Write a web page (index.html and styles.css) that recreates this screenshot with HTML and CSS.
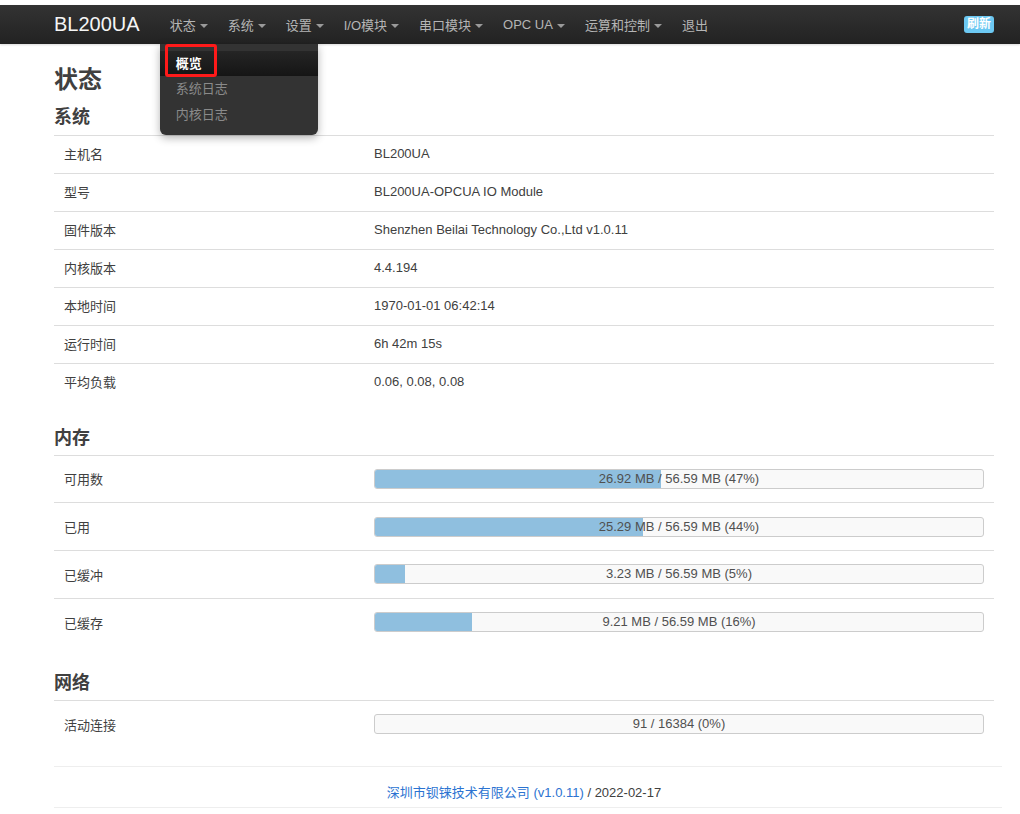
FILE: index.html
```html
<!DOCTYPE html>
<html lang="zh-CN">
<head>
<meta charset="utf-8">
<title>BL200UA - 状态</title>
<link rel="stylesheet" href="styles.css">
</head>
<body>
<header class="navbar">
  <div class="container nav-inner">
    <a class="brand" href="#">BL200UA</a>
    <ul class="nav">
      <li class="dropdown">
        <a href="#">状态<span class="caret"></span></a>
        <ul class="dropdown-menu">
          <li class="active"><a href="#">概览</a></li>
          <li><a href="#">系统日志</a></li>
          <li><a href="#">内核日志</a></li>
        </ul>
        <span class="mark"></span>
      </li>
      <li><a href="#">系统<span class="caret"></span></a></li>
      <li><a href="#">设置<span class="caret"></span></a></li>
      <li><a href="#">I/O模块<span class="caret"></span></a></li>
      <li><a href="#">串口模块<span class="caret"></span></a></li>
      <li><a href="#">OPC UA<span class="caret"></span></a></li>
      <li><a href="#">运算和控制<span class="caret"></span></a></li>
      <li><a href="#">退出</a></li>
    </ul>
    <span class="badge">刷新</span>
  </div>
</header>

<main class="container content">
  <h2>状态</h2>

  <h3 class="first">系统</h3>
  <table class="info">
    <tr><td class="label">主机名</td><td>BL200UA</td></tr>
    <tr><td class="label">型号</td><td>BL200UA-OPCUA IO Module</td></tr>
    <tr><td class="label">固件版本</td><td>Shenzhen Beilai Technology Co.,Ltd v1.0.11</td></tr>
    <tr><td class="label">内核版本</td><td>4.4.194</td></tr>
    <tr><td class="label">本地时间</td><td>1970-01-01 06:42:14</td></tr>
    <tr><td class="label">运行时间</td><td>6h 42m 15s</td></tr>
    <tr><td class="label">平均负载</td><td>0.06, 0.08, 0.08</td></tr>
  </table>

  <h3>内存</h3>
  <table class="info bars">
    <tr><td class="label">可用数</td><td><div class="progress"><div class="fill" style="width:47%"></div><span>26.92 MB / 56.59 MB (47%)</span></div></td></tr>
    <tr><td class="label">已用</td><td><div class="progress"><div class="fill" style="width:44%"></div><span>25.29 MB / 56.59 MB (44%)</span></div></td></tr>
    <tr><td class="label">已缓冲</td><td><div class="progress"><div class="fill" style="width:5%"></div><span>3.23 MB / 56.59 MB (5%)</span></div></td></tr>
    <tr><td class="label">已缓存</td><td><div class="progress"><div class="fill" style="width:16%"></div><span>9.21 MB / 56.59 MB (16%)</span></div></td></tr>
  </table>

  <h3 class="net">网络</h3>
  <table class="info bars">
    <tr><td class="label">活动连接</td><td><div class="progress"><div class="fill" style="width:0%"></div><span>91 / 16384 (0%)</span></div></td></tr>
  </table>

  <footer class="footer">
    <a href="#">深圳市钡铼技术有限公司 (v1.0.11)</a> / 2022-02-17
  </footer>
</main>
</body>
</html>
```

FILE: styles.css
```css
* { box-sizing: border-box; }

html, body {
  margin: 0;
  padding: 0;
  background: #fff;
}

body {
  padding-top: 5px;
  font-family: "Liberation Sans", Arial, "Noto Sans CJK SC", sans-serif;
  font-size: 13px;
  color: #404040;
}

a { text-decoration: none; }

.container {
  width: 940px;
  margin-left: 54px;
}

/* navbar */
.navbar {
  height: 39px;
  background: linear-gradient(to bottom, #333333, #222222);
  box-shadow: 0 1px 2px rgba(0,0,0,0.15);
  position: relative;
  z-index: 10;
}

.nav-inner {
  display: flex;
  align-items: center;
  height: 39px;
}

.brand {
  font-size: 20px;
  color: #f5f5f5;
  line-height: 39px;
  margin-right: 20px;
}

.nav {
  display: flex;
  list-style: none;
  margin: 0;
  padding: 0;
  height: 39px;
}

.nav > li {
  position: relative;
}

.nav > li > a {
  display: flex;
  align-items: center;
  height: 39px;
  padding: 0 10px;
  color: #b5b5b5;
  font-size: 13px;
}

.caret {
  display: inline-block;
  width: 0;
  height: 0;
  margin-left: 4px;
  margin-top: 2px;
  border-top: 4px solid #9a9a9a;
  border-left: 4px solid transparent;
  border-right: 4px solid transparent;
}

.badge {
  margin-left: auto;
  background: #6cc8f2;
  color: #fff;
  font-weight: bold;
  font-size: 12px;
  line-height: 16px;
  padding: 0 3px 1px;
  border-radius: 3px;
  margin-top: -1px;
}

/* dropdown */
.dropdown-menu {
  position: absolute;
  top: 39px;
  left: 0;
  width: 158px;
  margin: 0;
  padding: 7px 0 7px;
  list-style: none;
  background: #333;
  border-radius: 0 0 6px 6px;
  box-shadow: 0 3px 8px rgba(0,0,0,0.3);
}

.dropdown-menu li a {
  display: block;
  height: 26px;
  line-height: 26px;
  padding-left: 16px;
  color: #8a8a8a;
  font-size: 13px;
}

.dropdown-menu li.active a {
  color: #fff;
  font-weight: bold;
  height: 25px;
  line-height: 25px;
  background: linear-gradient(to bottom, #252525, #151515);
}

.mark {
  position: absolute;
  top: 39px;
  left: 5px;
  width: 52px;
  height: 33px;
  border: 3px solid #ff1a1a;
  border-radius: 3px;
}

/* content */
.content {
  padding-top: 22px;
}

h2 {
  margin: 0 0 11px;
  font-size: 24px;
  line-height: 28px;
  font-weight: bold;
  color: #404040;
}

h3 {
  margin: 24px 0 5px;
  font-size: 18px;
  line-height: 24px;
  font-weight: bold;
  color: #404040;
}

h3.first { margin: 0 0 6px; }
h3.net { margin-top: 25px; }

table.info {
  width: 100%;
  border-collapse: collapse;
}

table.info td {
  border-top: 1px solid #dddddd;
  height: 38px;
  padding: 0 10px 2px;
  vertical-align: middle;
}

table.info td.label {
  width: 320px;
}

table.info td + td {
  padding-left: 0;
}

table.bars td {
  height: 47.7px;
  padding-bottom: 0;
}

.progress {
  position: relative;
  height: 20px;
  background: #f9f9f9;
  border: 1px solid #cccccc;
  border-radius: 3px;
  overflow: hidden;
}

.progress .fill {
  position: absolute;
  left: 0;
  top: 0;
  bottom: 0;
  background: #8fbfdf;
}

.progress span {
  position: relative;
  display: block;
  text-align: center;
  line-height: 18px;
  font-size: 13px;
  color: #505050;
}

.footer {
  margin-top: 18px;
  border-top: 1px solid #eeeeee;
  border-bottom: 1px solid #eeeeee;
  margin-right: -8px;
  padding-right: 8px;
  height: 42px;
  padding-top: 17px;
  line-height: 18px;
  text-align: center;
  color: #404040;
}

.footer a {
  color: #2b73d1;
}
```
